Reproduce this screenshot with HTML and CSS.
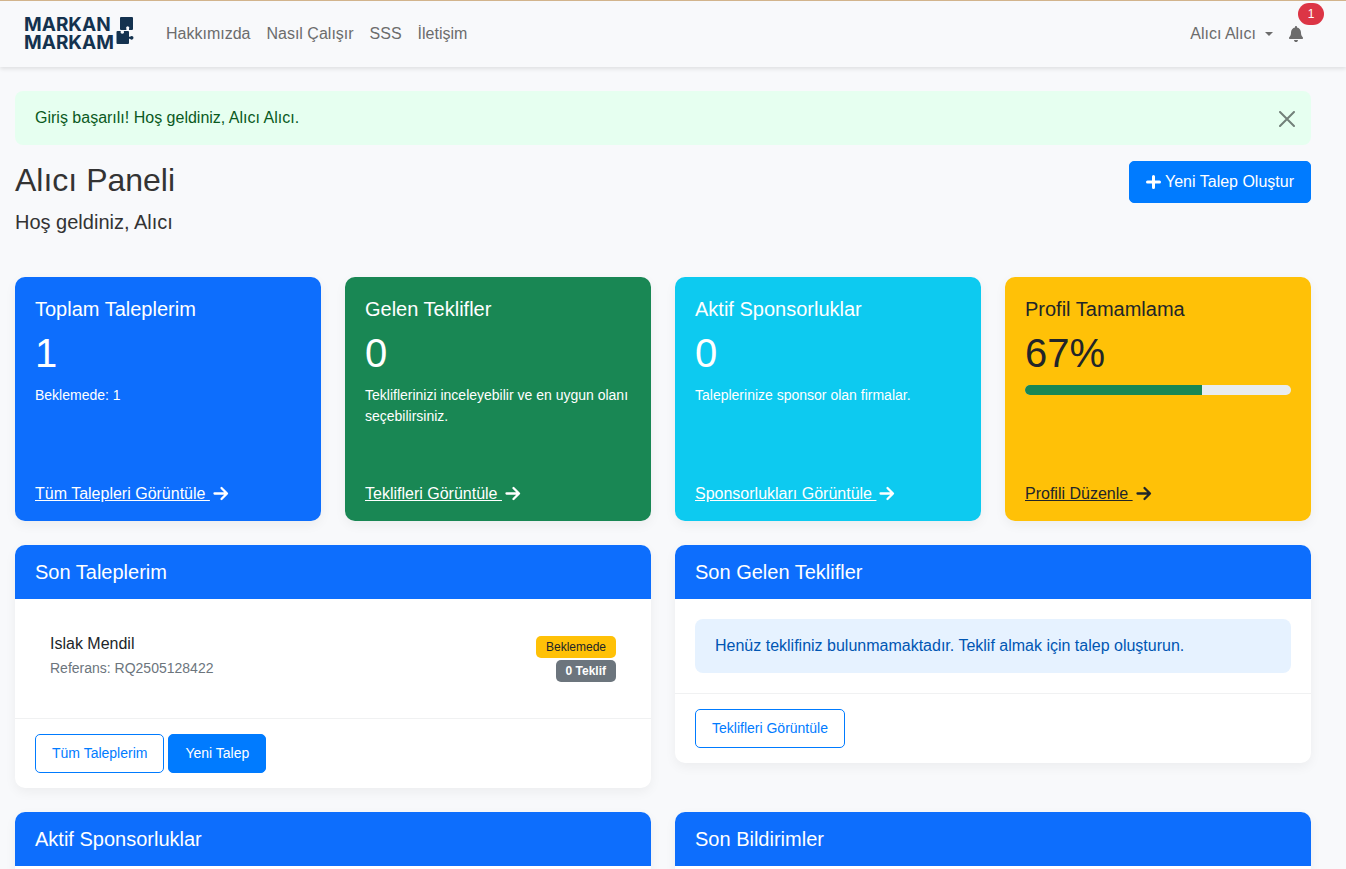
FILE: index.html
```html
<!DOCTYPE html>
<html lang="tr">
<head>
<meta charset="utf-8">
<title>Alıcı Paneli</title>
<meta name="viewport" content="width=device-width, initial-scale=1">
<link rel="stylesheet" href="styles.css">
</head>
<body>
<svg class="sprite" aria-hidden="true">
  <symbol id="arrow" viewBox="0 0 16 16"><path d="M1.500 7.500h12M8.500 2L14 7.500l-5.500 5.500"/></symbol>
</svg>
<header class="navbar">
  <a class="brand" href="#" aria-label="Markan Markam">
    <span class="brand-name">MARKAN<br>MARKAM</span>
    <svg class="brand-mark" viewBox="0 0 18 30" aria-hidden="true">
      <path d="M5 1h11q1 0 1 1v11q0 1-1 1h-3v-1.200a1.600 1.600 0 1 0-2.600 0V14H5q-1 0-1-1V2q0-1 1-1z"/>
      <path d="M1.500 15h3.300q-.8 2.800 1.500 2.800t1.500-2.800H12q1 0 1 1v4.800h1q.8-.9 1.800-.9 1.700.2 1.700 1.900t-1.700 1.900q-1 0-1.800-.9h-1V27q0 1-1 1H1.500q-1 0-1-1V16q0-1 1-1z"/>
    </svg>
  </a>
  <nav class="nav-links">
    <a href="#">Hakkımızda</a>
    <a href="#">Nasıl Çalışır</a>
    <a href="#">SSS</a>
    <a href="#">İletişim</a>
  </nav>
  <div class="nav-user">
    <button class="user-menu" type="button">Alıcı Alıcı<span class="caret"></span></button>
    <a class="bell" href="#" aria-label="Bildirimler">
      <svg viewBox="0 0 448 512" aria-hidden="true"><path d="M224 0c-17.700 0-32 14.300-32 32l0 19.200C119 66 64 130.600 64 208l0 18.800c0 47-17.300 92.400-48.500 127.600l-7.400 8.300c-8.400 9.400-10.400 22.900-5.300 34.400S19.400 416 32 416l384 0c12.600 0 24-7.400 29.200-18.900s3.100-25-5.300-34.400l-7.400-8.300C401.300 319.200 384 273.900 384 226.800l0-18.800c0-77.400-55-142-128-156.800L256 32c0-17.700-14.300-32-32-32zm45.300 493.300c12-12 18.700-28.300 18.700-45.300l-64 0-64 0c0 17 6.700 33.300 18.700 45.300s28.300 18.700 45.300 18.700s33.300-6.700 45.300-18.700z"/></svg>
      <span class="bell-count">1</span>
    </a>
  </div>
</header>

<main class="page">
  <div class="alert alert-success" role="alert">
    <span>Giriş başarılı! Hoş geldiniz, Alıcı Alıcı.</span>
    <button class="alert-close" type="button" aria-label="Kapat">
      <svg viewBox="0 0 16 16" aria-hidden="true"><path d="M1 1l14 14M15 1L1 15"/></svg>
    </button>
  </div>

  <div class="page-head">
    <div>
      <h1>Alıcı Paneli</h1>
      <p class="lead">Hoş geldiniz, Alıcı</p>
    </div>
    <a class="btn btn-primary" href="#"><svg class="plus" viewBox="0 0 15 14" aria-hidden="true"><path d="M7.500 1.500v11M1.500 7h12"/></svg>Yeni Talep Oluştur</a>
  </div>

  <section class="stats">
    <article class="stat stat-blue">
      <h2>Toplam Taleplerim</h2>
      <p class="figure">1</p>
      <p class="note">Beklemede: 1</p>
      <div class="stat-link"><a href="#">Tüm Talepleri Görüntüle&nbsp;</a><svg class="arrow"><use href="#arrow"/></svg></div>
    </article>
    <article class="stat stat-green">
      <h2>Gelen Teklifler</h2>
      <p class="figure">0</p>
      <p class="note">Tekliflerinizi inceleyebilir ve en uygun olanı seçebilirsiniz.</p>
      <div class="stat-link"><a href="#">Teklifleri Görüntüle&nbsp;</a><svg class="arrow"><use href="#arrow"/></svg></div>
    </article>
    <article class="stat stat-cyan">
      <h2>Aktif Sponsorluklar</h2>
      <p class="figure">0</p>
      <p class="note">Taleplerinize sponsor olan firmalar.</p>
      <div class="stat-link"><a href="#">Sponsorlukları Görüntüle&nbsp;</a><svg class="arrow"><use href="#arrow"/></svg></div>
    </article>
    <article class="stat stat-yellow">
      <h2>Profil Tamamlama</h2>
      <p class="figure">67%</p>
      <div class="progress" role="progressbar" aria-label="Profil Tamamlama" aria-valuenow="67" aria-valuemin="0" aria-valuemax="100"><div class="progress-bar" style="width: 66.500%"></div></div>
      <div class="stat-link"><a href="#">Profili Düzenle&nbsp;</a><svg class="arrow"><use href="#arrow"/></svg></div>
    </article>
  </section>

  <section class="panels">
    <article class="card">
      <h2 class="card-head">Son Taleplerim</h2>
      <div class="card-body">
        <a class="request" href="#">
          <span class="request-info">
            <span class="request-name">Islak Mendil</span>
            <span class="request-ref">Referans: RQ2505128422</span>
          </span>
          <span class="request-tags">
            <span class="badge badge-warning">Beklemede</span>
            <span class="badge badge-muted">0 Teklif</span>
          </span>
        </a>
      </div>
      <div class="card-foot">
        <a class="btn btn-sm btn-outline" href="#">Tüm Taleplerim</a>
        <a class="btn btn-sm btn-primary" href="#">Yeni Talep</a>
      </div>
    </article>
    <article class="card">
      <h2 class="card-head">Son Gelen Teklifler</h2>
      <div class="card-body">
        <div class="alert alert-info">Henüz teklifiniz bulunmamaktadır. Teklif almak için talep oluşturun.</div>
      </div>
      <div class="card-foot">
        <a class="btn btn-sm btn-outline" href="#">Teklifleri Görüntüle</a>
      </div>
    </article>
    <article class="card">
      <h2 class="card-head">Aktif Sponsorluklar</h2>
      <div class="card-body"></div>
    </article>
    <article class="card">
      <h2 class="card-head">Son Bildirimler</h2>
      <div class="card-body"></div>
    </article>
  </section>
</main>
</body>
</html>
```

FILE: styles.css
```css
* {
  box-sizing: border-box;
}

html {
  height: 100%;
}

body {
  height: 100%;
  margin: 0;
  overflow: hidden;
  background: #f8f9fb;
  color: #333;
  font-family: "Liberation Sans", Arial, sans-serif;
  font-size: 16px;
  line-height: 24px;
}

h1, h2, p {
  margin: 0;
  font-weight: 400;
}

a {
  color: inherit;
  text-decoration: none;
}

.sprite {
  display: none;
}

/* Navigation */
.navbar {
  display: flex;
  align-items: center;
  height: 67px;
  padding: 0 43px 0 24px;
  border-top: 1px solid #d2b48c;
  background: #f8f9fb;
  box-shadow: 0 2px 4px rgba(0, 0, 0, 0.1);
  color: #6c6c6c;
}

.brand {
  display: flex;
  align-items: flex-start;
  margin-right: 32px;
  color: #14324f;
}

.brand-name {
  width: 92px;
  font-family: Inter, sans-serif;
  font-size: 19px;
  font-weight: 700;
  line-height: 18px;
}

.brand-mark {
  width: 18px;
  height: 30px;
  fill: currentColor;
}

.nav-links {
  display: flex;
  gap: 16px;
}

.nav-user {
  display: flex;
  align-items: center;
  gap: 16px;
  margin-left: auto;
}

.user-menu {
  display: flex;
  align-items: center;
  gap: 9px;
  padding: 0;
  border: 0;
  background: none;
  color: inherit;
  font: inherit;
}

.caret {
  border: 4px solid transparent;
  border-top-color: currentColor;
  border-bottom: 0;
}

.bell {
  position: relative;
  display: flex;
}

.bell svg {
  width: 14px;
  height: 16px;
  fill: currentColor;
}

.bell-count {
  position: absolute;
  left: 9px;
  bottom: 17px;
  width: 26px;
  border-radius: 11px;
  background: #dc3545;
  color: #fff;
  font-size: 12px;
  line-height: 22px;
  text-align: center;
}

/* Page */
.page {
  padding: 24px 35px 24px 15px;
}

.alert {
  padding: 15px 20px;
  border-radius: 8px;
}

.alert-success {
  display: flex;
  justify-content: space-between;
  align-items: flex-start;
  margin-bottom: 16px;
  padding-right: 16px;
  background: #e6fff0;
  color: #0a5a1e;
}

.alert-close {
  display: flex;
  padding: 5px 0 0;
  border: 0;
  background: none;
}

.alert-close svg {
  width: 16px;
  height: 16px;
  fill: none;
  stroke: #73807a;
  stroke-width: 2;
  stroke-linecap: round;
}

.page-head {
  display: flex;
  justify-content: space-between;
  align-items: flex-start;
  margin-bottom: 40px;
}

h1 {
  font-size: 32px;
  line-height: 38px;
}

.lead {
  margin-top: 8px;
  font-size: 20px;
  line-height: 30px;
}

.btn {
  display: inline-flex;
  align-items: center;
  gap: 4px;
  padding: 8px 16px;
  border: 1px solid #007bff;
  border-radius: 5px;
}

.btn-sm {
  font-size: 14px;
  line-height: 21px;
}

.btn-primary {
  background: #007bff;
  color: #fff;
}

.btn-outline {
  background: #fff;
  color: #007bff;
}

.plus {
  width: 15px;
  height: 14px;
  fill: none;
  stroke: currentColor;
  stroke-width: 3;
  stroke-linecap: round;
}

/* Summary cards */
.stats {
  display: grid;
  grid-template-columns: repeat(4, 1fr);
  gap: 24px;
  margin-bottom: 24px;
}

.stat {
  display: flex;
  flex-direction: column;
  min-height: 244px;
  padding: 20px 20px 15px;
  border-radius: 10px;
  box-shadow: 0 4px 12px rgba(0, 0, 0, 0.05);
  color: #fff;
}

.stat h2 {
  margin-bottom: 8px;
  font-size: 20px;
  line-height: 24px;
}

.figure {
  margin-bottom: 8px;
  font-size: 40px;
  line-height: 48px;
}

.note {
  font-size: 14px;
  line-height: 21px;
}

.stat-link {
  display: flex;
  align-items: center;
  gap: 3px;
  margin-top: auto;
}

.stat-link a {
  text-decoration: underline;
}

.arrow {
  width: 16px;
  height: 16px;
  fill: none;
  stroke: currentColor;
  stroke-width: 2.300;
  stroke-linecap: round;
  stroke-linejoin: round;
}

.stat-blue {
  background: #0d6efd;
}

.stat-green {
  background: #198754;
}

.stat-cyan {
  background: #0dcaf0;
}

.stat-yellow {
  background: #ffc107;
  color: #212529;
}

.progress {
  height: 10px;
  overflow: hidden;
  border-radius: 5px;
  background: #e9ecef;
}

.progress-bar {
  height: 100%;
  background: #198754;
}

/* Detail cards */
.panels {
  display: grid;
  grid-template-columns: repeat(2, 1fr);
  align-items: start;
  gap: 24px;
}

.card {
  overflow: hidden;
  border-radius: 10px;
  background: #fff;
  box-shadow: 0 4px 12px rgba(0, 0, 0, 0.05);
}

.card-head {
  padding: 15px 20px;
  background: #0d6efd;
  color: #fff;
  font-size: 20px;
  line-height: 24px;
}

.card-body {
  min-height: 40px;
  padding: 20px;
}

.card-foot {
  display: flex;
  gap: 4px;
  padding: 15px 20px;
  border-top: 1px solid #f0f1f2;
}

.alert-info {
  background: #e6f2ff;
  color: #0056b3;
}

.request {
  display: flex;
  justify-content: space-between;
  padding: 12px 15px 16px;
}

.request-info {
  display: flex;
  flex-direction: column;
  color: #6c757d;
  font-size: 14px;
}

.request-name {
  color: #212529;
  font-size: 16px;
  line-height: 26px;
}

.request-tags {
  display: flex;
  flex-direction: column;
  align-items: flex-end;
  gap: 2px;
  padding-top: 5px;
}

.request-ref {
  line-height: 22px;
}

.badge {
  padding: 0 10px;
  border-radius: 5px;
  font-size: 12px;
  line-height: 22px;
}

.badge-warning {
  background: #ffc107;
  color: #212529;
}

.badge-muted {
  background: #6c757d;
  color: #fff;
  font-weight: 700;
}
```
